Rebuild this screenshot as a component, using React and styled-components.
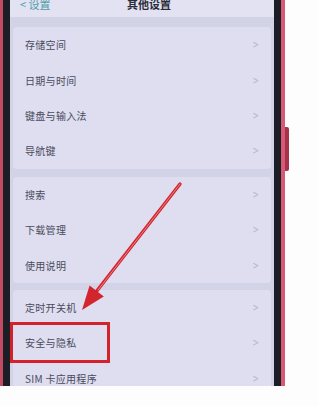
import React from "react";
import styled, { createGlobalStyle } from "styled-components";

const Global = createGlobalStyle`
  html, body { margin: 0; padding: 0; background: #ffffff; }
  body { font-family: "Noto Sans CJK SC", "Noto Sans", sans-serif; }
`;

const Page = styled.div`
  width: 318px;
  height: 406px;
  background: #fdfdfd;
  display: flex;
  align-items: flex-start;
  overflow: hidden;
`;

const Phone = styled.div`
  height: 386px;
  display: flex;
  border-left: 3px solid #c24a62;
  border-right: 4px solid #d65a76;
  background: #1d1d26;
  padding: 0 7px;
  box-sizing: border-box;
  width: 285px;
`;

const SideButton = styled.div`
  width: 4px;
  height: 44px;
  margin-top: 127px;
  background: #a8324e;
  border-radius: 0 2px 2px 0;
`;

const Screen = styled.div`
  position: relative;
  width: 264px;
  height: 386px;
  background: #d3d3e8;
  overflow: hidden;
  display: flex;
  flex-direction: column;
`;

const Header = styled.div`
  height: 17px;
  flex: none;
  background: #e2e2f3;
  position: relative;
  display: flex;
  align-items: flex-start;
  justify-content: center;
`;

const Back = styled.span`
  position: absolute;
  left: 10px;
  top: -3px;
  font-size: 11px;
  line-height: 14px;
  color: #4f9fa6;
`;

const Title = styled.span`
  margin-top: -3px;
  margin-left: 14px;
  font-size: 11px;
  line-height: 14px;
  font-weight: 700;
  color: #2c2c38;
`;

const Card = styled.div`
  flex: none;
  margin: ${(p) => p.$gap}px 3px 0 3px;
  background: #dedef0;
  border-radius: 4px;
  display: flex;
  flex-direction: column;
`;

const Row = styled.div`
  height: 35.4px;
  display: flex;
  align-items: center;
  justify-content: space-between;
  padding: 0 10px 0 12px;
  font-size: 10px;
  color: #4a4a5c;
  letter-spacing: 0.3px;
`;

const Chevron = styled.span`
  font-size: 11px;
  color: #b4b4ca;
  font-family: "DejaVu Sans", sans-serif;
  transform: scaleX(0.7);
`;

const Highlight = styled.div`
  position: absolute;
  left: 0;
  top: 322px;
  width: 100px;
  height: 41px;
  box-sizing: border-box;
  border: 3px solid #d3222c;
`;

const ArrowSvg = styled.svg`
  position: absolute;
  left: 0;
  top: 0;
  pointer-events: none;
`;

const groups = [
  { gap: 10, items: ["存储空间", "日期与时间", "键盘与输入法", "导航键"] },
  { gap: 8, items: ["搜索", "下载管理", "使用说明"] },
  { gap: 7, items: ["定时开关机", "安全与隐私", "SIM 卡应用程序"] },
];

export default function App() {
  return (
    <Page>
      <Global />
      <Phone>
        <Screen>
          <Header>
            <Back>&lt; 设置</Back>
            <Title>其他设置</Title>
          </Header>
          {groups.map((g, i) => (
            <Card key={i} $gap={g.gap}>
              {g.items.map((t) => (
                <Row key={t}>
                  <span>{t}</span>
                  <Chevron>&gt;</Chevron>
                </Row>
              ))}
            </Card>
          ))}
          <Highlight />
          <ArrowSvg width="264" height="386" viewBox="0 0 264 386">
            <line x1="170" y1="184" x2="86" y2="292" stroke="#d2252d" strokeWidth="3.4" strokeLinecap="round" />
            <line x1="170" y1="184" x2="88" y2="290" stroke="#ec7f86" strokeWidth="1" strokeLinecap="round" />
            <polygon points="72,310 79.6,285.6 93.8,296.6" fill="#d2252d" />
          </ArrowSvg>
        </Screen>
      </Phone>
      <SideButton />
    </Page>
  );
}
